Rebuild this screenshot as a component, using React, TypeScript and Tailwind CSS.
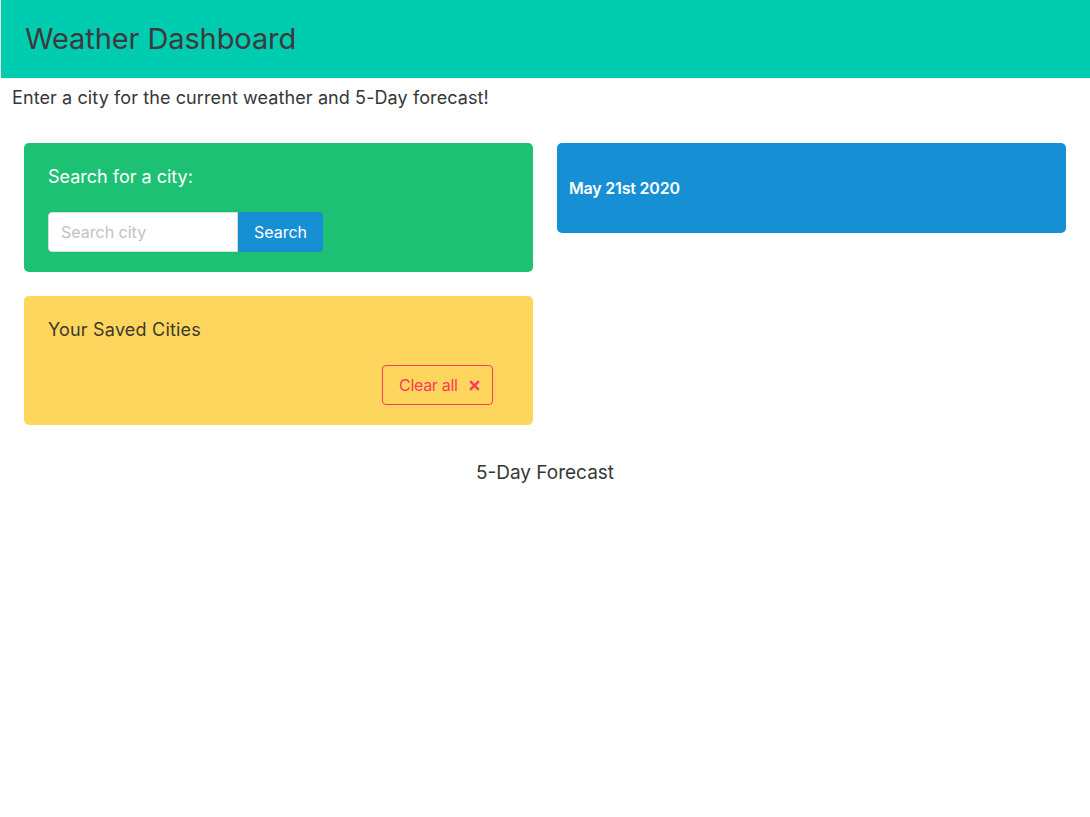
import React, { useState } from 'react';

const font = { fontFamily: 'Inter, "Noto Sans", sans-serif' };

const TimesIcon = ({ className }: { className?: string }) => (
  <svg viewBox="0 0 12 12" className={className} fill="none" stroke="currentColor" strokeWidth="2.6" strokeLinecap="round">
    <path d="M2 2 L10 10 M10 2 L2 10" />
  </svg>
);

export default function App() {
  const [city, setCity] = useState('');
  const [saved, setSaved] = useState<string[]>([]);

  return (
    <div className="min-h-screen bg-white text-[#363636]" style={font}>
      {/* Header */}
      <header className="h-[79px] bg-[#00cdb0] border-l border-b border-[#eef2f1] flex items-center px-6">
        <h1 className="text-[29px] font-normal text-[#3d3a3d] tracking-[-0.1px]">Weather Dashboard</h1>
      </header>

      <p className="px-3 pt-[5px] text-[18px] leading-[27px] tracking-[0.1px] text-[#363636]">
        Enter a city for the current weather and 5-Day forecast!
      </p>

      {/* Columns */}
      <section className="flex px-3 pt-5">
        <div className="w-1/2 p-3">
          <div className="bg-[#1dc173] rounded-[5px] px-6 pt-5 pb-5">
            <label className="block text-[18px] leading-[27px] text-white">Search for a city:</label>
            <div className="flex mt-[22px]">
              <input
                value={city}
                onChange={(e) => setCity(e.target.value)}
                placeholder="Search city"
                className="w-[190px] h-10 px-3 bg-white border border-[#dbdbdb] rounded-l-[4px] text-[16px] text-[#363636] placeholder:text-[#c2c2c2] outline-none"
              />
              <button
                onClick={() => city && setSaved([...saved, city])}
                className="h-10 w-[85px] bg-[#178fd5] text-white text-[16px] rounded-r-[4px]"
              >
                Search
              </button>
            </div>
          </div>

          <div className="mt-6 bg-[#fed65e] rounded-[5px] pl-6 pr-10 pt-5 pb-5">
            <h2 className="text-[18px] leading-[27px] text-[#3d3a2a] tracking-[0.2px]">Your Saved Cities</h2>
            {saved.map((c) => (
              <div key={c} className="text-[16px]">{c}</div>
            ))}
            <div className="flex justify-end mt-[22px]">
              <button
                onClick={() => setSaved([])}
                className="h-10 w-[111px] flex items-center gap-[11px] pl-4 border border-[#ff3860] rounded-[4px] text-[#ff3860] text-[16px] tracking-[-0.3px]"
              >
                Clear all
                <TimesIcon className="w-[11px] h-[11px]" />
              </button>
            </div>
          </div>
        </div>

        <div className="w-1/2 p-3">
          <div className="h-[90px] bg-[#178fd5] rounded-[5px] flex items-center px-3">
            <span className="text-white text-[16px] font-semibold tracking-[-0.2px]">May 21st 2020</span>
          </div>
        </div>
      </section>

      <h3 className="mt-[21px] text-center text-[19px] leading-[30px] text-[#363636]">5-Day Forecast</h3>
    </div>
  );
}
